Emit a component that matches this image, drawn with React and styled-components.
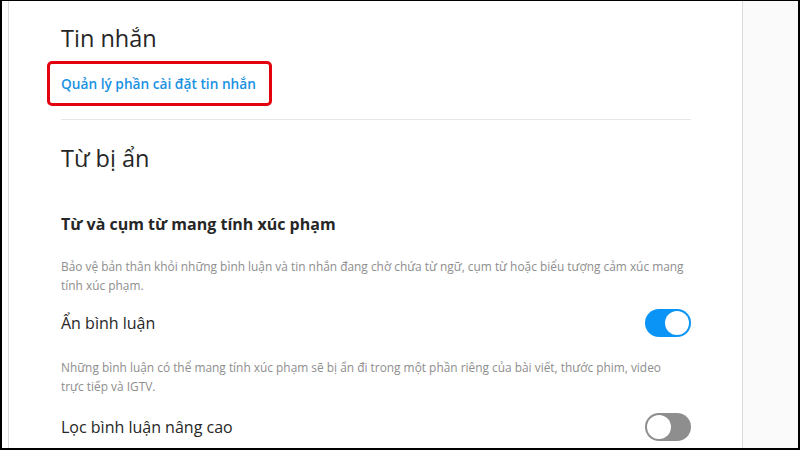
import styled, { createGlobalStyle } from "styled-components";

const GlobalStyle = createGlobalStyle`
  html, body {
    margin: 0;
    padding: 0;
    background: #ffffff;
  }
  body {
    font-family: "Open Sans", "Noto Sans", sans-serif;
    color: #262626;
  }
`;

const Frame = styled.div`
  box-sizing: border-box;
  width: 800px;
  height: 450px;
  border-style: solid;
  border-color: #000000;
  border-width: 1px 2px 2px 2px;
  display: flex;
  overflow: hidden;
  background: #ffffff;
`;

const Gutter = styled.div`
  width: 6px;
  flex-shrink: 0;
  border-right: 1px solid #dbdbdb;
`;

const Main = styled.main`
  width: 734px;
  flex-shrink: 0;
  box-sizing: border-box;
  padding: 0 51px 0 52px;
  border-right: 1px solid #dbdbdb;
`;

const Side = styled.aside`
  flex: 1;
  background: #fafafa;
`;

const Section = styled.section`
  padding: ${(p) => p.$pad || "0"};
`;

const Title = styled.h2`
  margin: 0;
  font-size: 23.5px;
  font-weight: 400;
  line-height: 32px;
  color: #262626;
`;

const Highlight = styled.div`
  display: inline-block;
  margin: 7px 0 0 -14px;
  padding: 10px 13px 10px 11px;
  border: 3px solid #e3000f;
  border-radius: 5px;
`;

const Link = styled.a`
  display: block;
  color: #1a91e3;
  font-size: 13.7px;
  font-weight: 600;
  line-height: 19px;
  text-decoration: none;
  cursor: pointer;
`;

const Divider = styled.hr`
  margin: 13px 0 0 0;
  border: 0;
  border-top: 1px solid #e6e6e6;
`;

const Subhead = styled.h3`
  margin: ${(p) => p.$margin || "0"};
  font-size: 16px;
  font-weight: 700;
  line-height: 22px;
  color: #262626;
`;

const Desc = styled.p`
  max-width: 623px;
  margin: ${(p) => p.$margin || "0"};
  font-size: 11.9px;
  line-height: 19px;
  color: #8e8e8e;
`;

const Row = styled.div`
  display: flex;
  align-items: center;
  justify-content: space-between;
  margin: ${(p) => p.$margin || "0"};
`;

const Label = styled.span`
  font-size: 16px;
  line-height: 22px;
  color: #262626;
`;

const Track = styled.button`
  position: relative;
  width: 46px;
  height: 28px;
  padding: 0;
  border: 0;
  border-radius: 14px;
  background: ${(p) => (p.$on ? "#0a95f6" : "#8e8e8e")};
  cursor: pointer;
`;

const Knob = styled.span`
  position: absolute;
  top: 2px;
  left: ${(p) => (p.$on ? "20px" : "2px")};
  width: 24px;
  height: 24px;
  border-radius: 50%;
  background: #ffffff;
`;

const Toggle = ({ on }) => (
  <Track $on={on} aria-pressed={on}>
    <Knob $on={on} />
  </Track>
);

export default function App() {
  return (
    <>
      <GlobalStyle />
      <Frame>
        <Gutter />
        <Main>
          <Section $pad="21px 0 0 0">
            <Title>Tin nhắn</Title>
            <Highlight>
              <Link>Quản lý phần cài đặt tin nhắn</Link>
            </Highlight>
            <Divider />
          </Section>

          <Section $pad="22px 0 0 0">
            <Title>Từ bị ẩn</Title>
            <Subhead $margin="39px 0 0 0">Từ và cụm từ mang tính xúc phạm</Subhead>
            <Desc $margin="22px 0 0 0">
              Bảo vệ bản thân khỏi những bình luận và tin nhắn đang chờ chứa từ ngữ, cụm từ hoặc biểu tượng cảm xúc mang
              tính xúc phạm.
            </Desc>
            <Row $margin="14px 0 0 0">
              <Label>Ẩn bình luận</Label>
              <Toggle on />
            </Row>
            <Desc $margin="21px 0 0 0">
              Những bình luận có thể mang tính xúc phạm sẽ bị ẩn đi trong một phần riêng của bài viết, thước phim, video
              trực tiếp và IGTV.
            </Desc>
            <Row $margin="17px 0 0 0">
              <Label>Lọc bình luận nâng cao</Label>
              <Toggle on={false} />
            </Row>
          </Section>
        </Main>
        <Side />
      </Frame>
    </>
  );
}
